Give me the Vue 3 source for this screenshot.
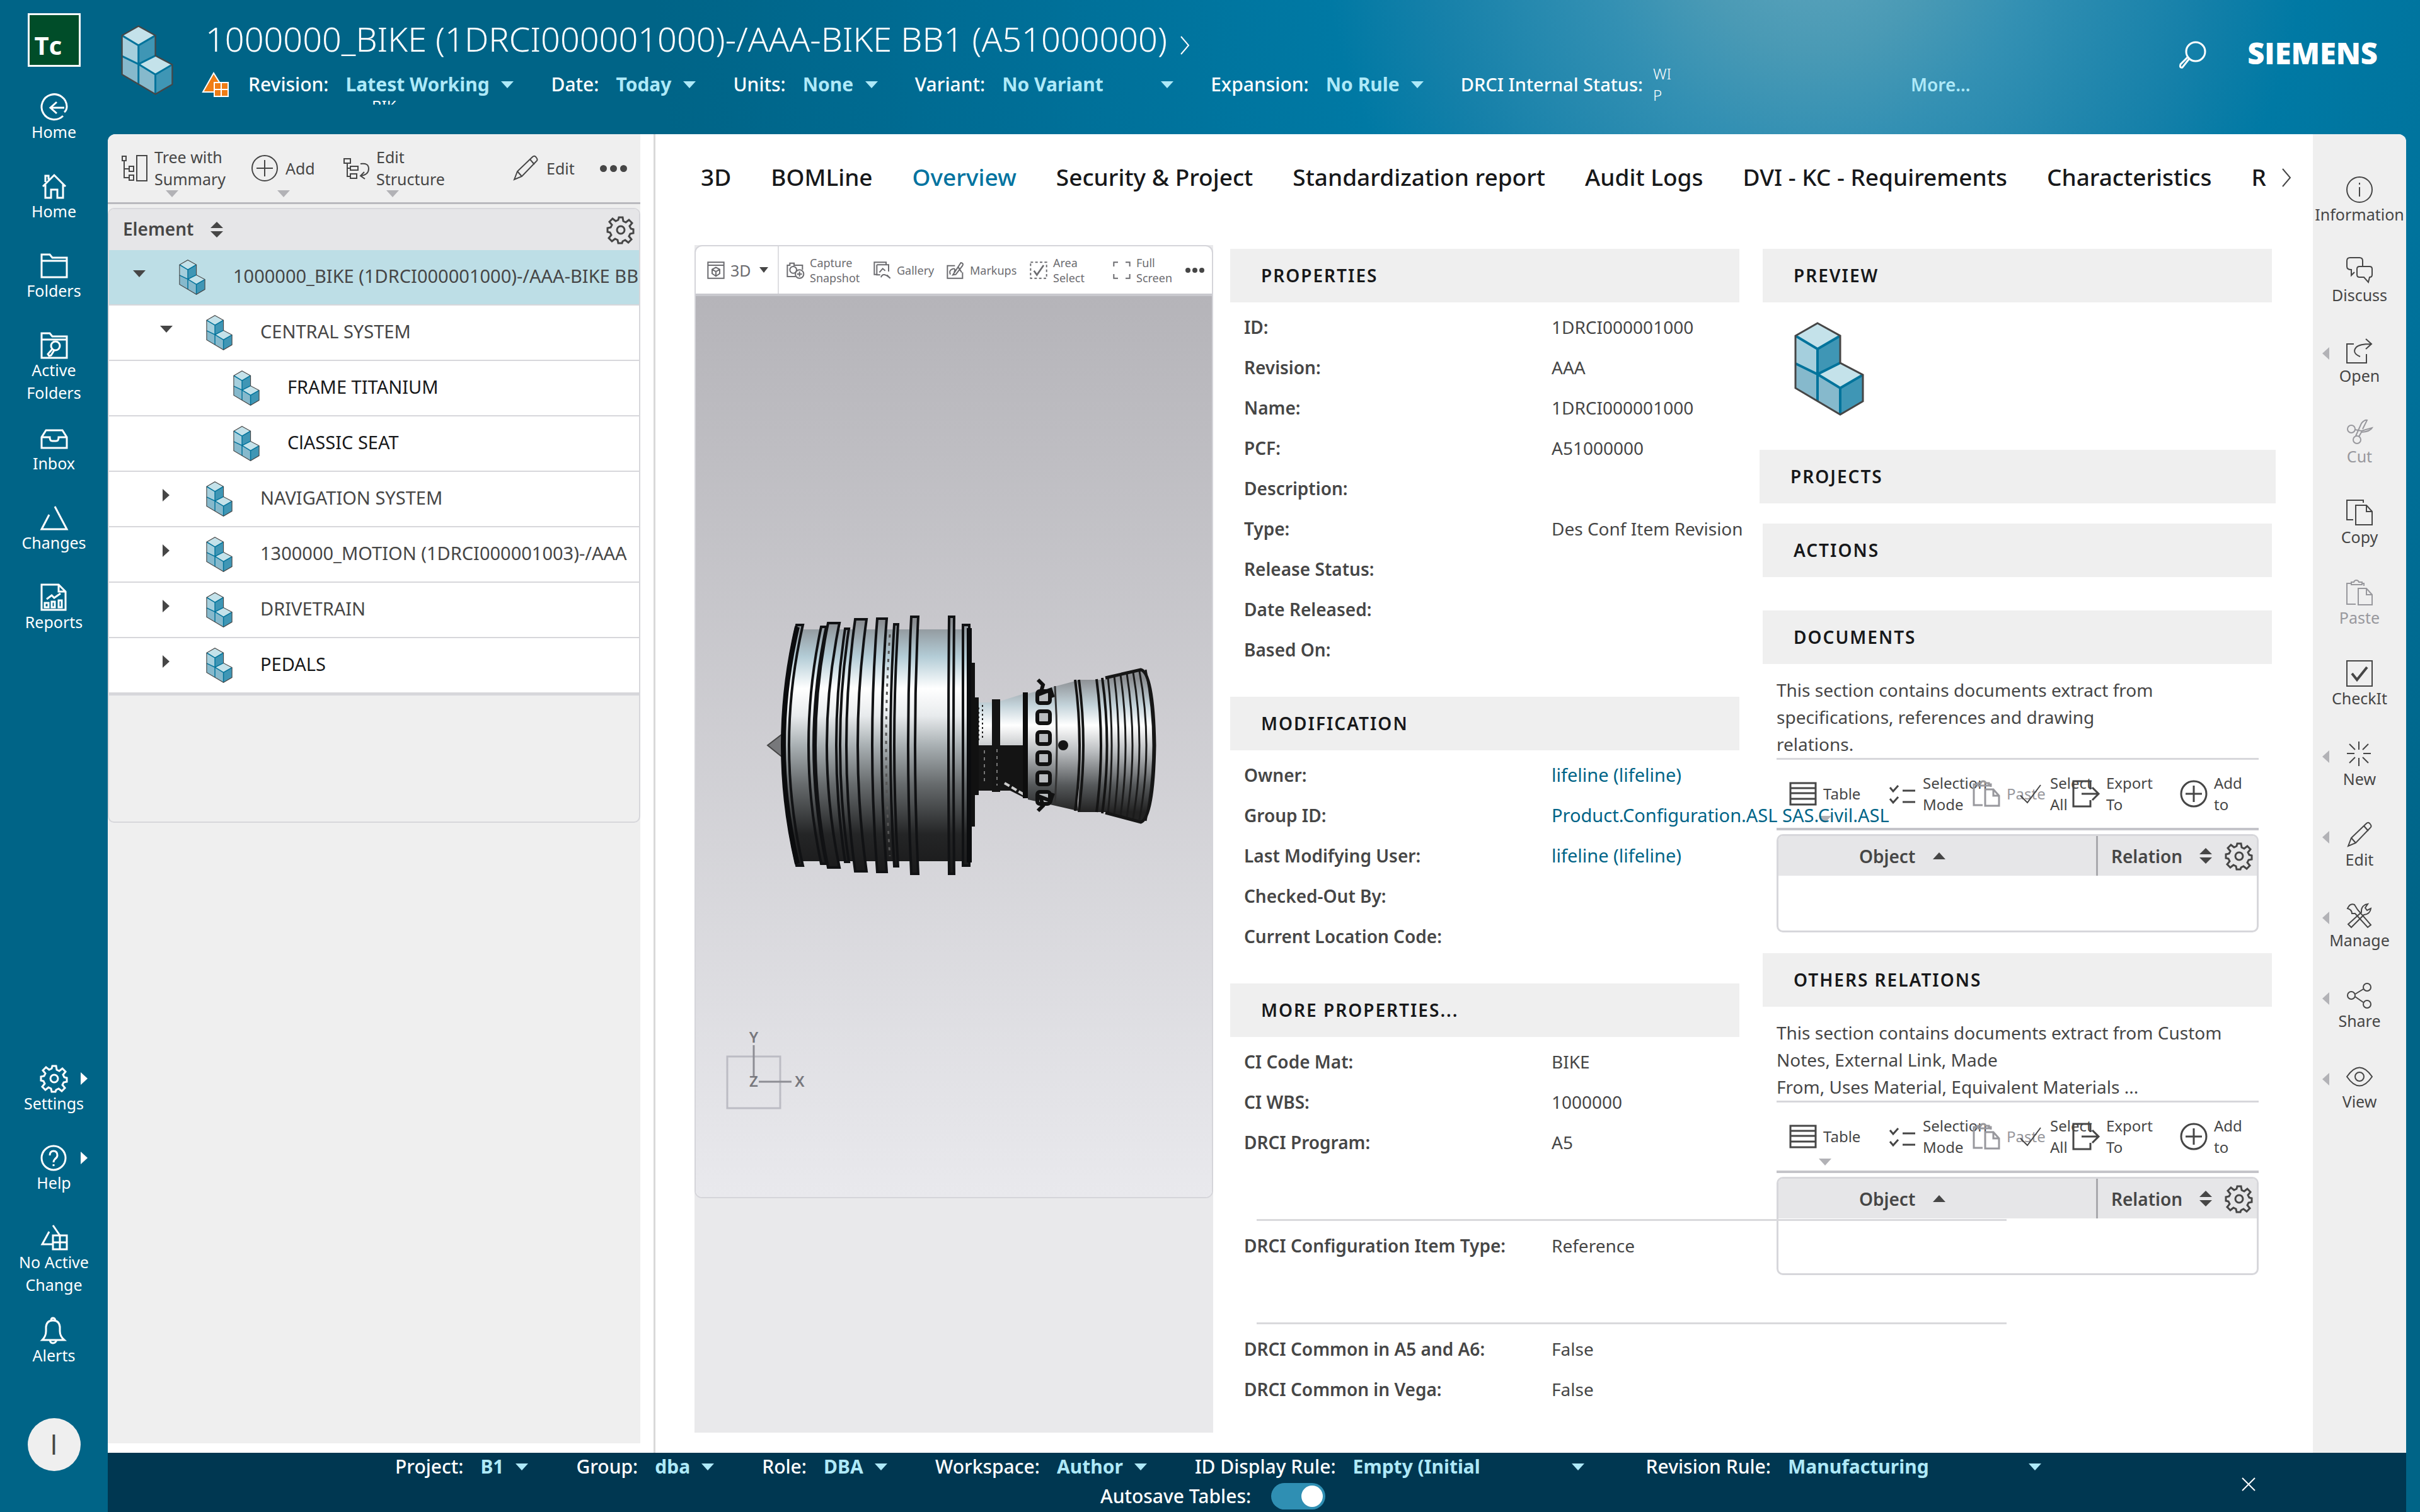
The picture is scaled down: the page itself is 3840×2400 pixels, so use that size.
<script setup>
import { ref } from 'vue'

const icons = {
  homeBack: '<path d="M35 35A20 20 0 1 1 41 20Q41 26 37 29M37 22H15M25 13 15 22 25 31"/>',
  home: '<path d="M3 21 21 3 39 21M7 18V39H16V26H26V39H35V18M7 14V4H12V10"/>',
  folder: '<path d="M1 39V3H14L18 8H41V39ZM1 13H41"/>',
  folderSearch: '<path d="M1 41V2H14L18 7H41V41ZM1 12H41"/><circle cx="23" cy="22" r="7"/><path d="M18 27l-7 8 2 3 3-1 5-8"/>',
  inbox: '<path d="M1 36V19L8 8H34L41 19V36ZM1 19H14Q14 25 18 25H24Q28 25 28 19H41"/>',
  triangle: '<path d="M22 3 41 39H1L13 16"/>',
  report: '<path d="M1 41V1H28L39 12V41ZM28 1V12H39M9 24l8-6 4 4 10-7"/><path d="M6 30h6v7H6zM17 28h5v9h-5zM28 26h5v11h-5z"/>',
  gear: '<path d="M18 2h6l1 6 4 2 5-4 5 5-4 5 2 4 4 1v6l-5 1-2 4 4 5-5 5-5-4-4 2-1 3h-6l-1-5-4-2-5 4-5-5 4-5-2-4-4-1v-6l5-1 2-4-4-5 5-5 5 4 4-2z" transform="translate(0 -1)"/><circle cx="21" cy="21" r="6"/>',
  help: '<circle cx="20" cy="21" r="19"/><path d="M14 17Q14 10 20 10T26 17Q26 20 22 23 20 25 20 28"/><path d="M20 31v3"/>',
  change: '<path d="M19 2 30 18M13 12 2 32H19"/><path d="M19 18H41V40H19ZM30 18V40M19 29H41"/>',
  bell: '<path d="M2 36Q8 30 8 22V15Q9 5 19 5T30 15V22Q30 30 37 36ZM14 36q1 5 5 5t6-5M16 5q0-4 3-4t4 4"/>',
  tree: '<path d="M2 2H8V9H2ZM5 9V36H13M5 22H13M13 18H20V26H13ZM13 32H20V40H13ZM25 1H41V41H25Z"/>',
  plus: '<circle cx="21" cy="21" r="20"/><path d="M21 8V34M8 21H34"/>',
  structure: '<path d="M2 6H12V13H2ZM12 18H24V24H12ZM12 30H22V37H12ZM7 13V34H12M7 21H12M28 14Q41 12 41 22 41 31 29 33M34 27l-6 6 7 5"/>',
  pencil: '<path d="M3 39l5-13L32 3Q35 0 38 4 41 8 38 10L15 34ZM28 7l7 8M8 26l7 8"/>',
  info: '<circle cx="21" cy="21" r="20"/><path d="M21 17V32M21 10v3"/>',
  discuss: '<path d="M13 24l-5 5V20Q1 20 1 15V6Q1 1 6 1H21Q26 1 26 6V14"/><path d="M21 15H37Q41 15 41 19V28Q41 32 37 32L35 40 28 32H21Q17 32 17 28V19Q17 15 21 15Z"/>',
  open: '<path d="M12 10H1V40H32V26M22 30Q8 24 16 15 21 10 39 10M31 2l9 8-9 8"/>',
  cut: '<circle cx="8" cy="17" r="6"/><circle cx="17" cy="34" r="6"/><path d="M14 18 24 20 41 15Q38 21 24 22L20 29M15 28 24 8Q29 2 33 3L26 17"/>',
  copy: '<path d="M11 33H1V2H27V6M15 10H32L41 20V41H15ZM32 10V20H41"/>',
  paste: '<path d="M15 39H1V6H8M8 8V4H12Q13 1 16 1T20 4H25V8ZM25 6H28V10M19 14H32L41 24V40H19ZM32 14V24H41"/>',
  checkBox: '<path d="M1 1H41V41H1Z"/><path d="M9 21l8 10L33 11" stroke-width="4"/>',
  burst: '<path d="M20 1V14M20 27V40M1 20H13M27 20H39M5 5l9 9M35 5l-9 9M5 35l9-9M35 35l-9-9"/>',
  tools: '<path d="M8 40 3 35 24 16Q23 8 30 4L34 3 30 9 33 13 39 10Q38 19 28 20ZM2 10Q6 1 13 4L18 12 39 36 34 40 14 18 9 18Q9 12 2 10Z"/>',
  share: '<circle cx="8" cy="20" r="6"/><circle cx="33" cy="7" r="6"/><circle cx="33" cy="34" r="6"/><path d="M14 18 27 10M14 22 27 31"/>',
  eye: '<path d="M1 21Q21-8 41 21 21 50 1 21Z"/><circle cx="21" cy="21" r="7"/>',
  search: '<circle cx="26" cy="16" r="15"/><path d="M16 27 5 41Q0 42 2 36L14 24"/>',
  list: '<path d="M1 4H41V38H1ZM1 12H41M1 20H41M1 29H41"/>',
  selection: '<path d="M1 11l5 6 8-9M1 29l5 6 8-9M21 16H41M21 34H41"/>',
  check: '<path d="M1 24l11 11L33 7" stroke-width="2"/>',
  exportTo: '<path d="M28 14V1H1V41H28V31M14 21H40M31 11l10 10-10 10"/>',
  cube: '<path d="M2 2H40V40H2ZM2 9H40M21 14l9 5v10l-9 6-9-6V19ZM12 19l9 5 9-5M21 24V35"/>',
  camera: '<path d="M22 36H2V9H8V4H18V9H38V20M8 20a8 8 0 0 1 16 0 8 8 0 0 1-16 0"/><circle cx="31" cy="30" r="10"/><path d="M31 24V36M25 30H37"/>',
  gallery: '<path d="M9 31H2V2H30V8M8 8H36V24M8 8V32H16M14 26l8-9 6 5M18 38q4-14 22 2M32 32l8 8"/>',
  markup: '<path d="M20 10H2V40H38V26M9 31Q5 21 14 18T18 26M15 32 34 3Q41 4 38 10L22 31ZM28 14l8 12"/>',
  area: '<path d="M2 2H40V40H2Z" stroke-dasharray="6 5"/><path d="M10 22l7 10L33 9" stroke-width="4"/>',
  full: '<path d="M2 12V2H12M30 2H40V12M40 30V40H30M12 40H2V30"/>',
}

const rail = [
  { icon: 'homeBack', label: 'Home' },
  { icon: 'home', label: 'Home' },
  { icon: 'folder', label: 'Folders' },
  { icon: 'folderSearch', label: 'Active Folders', tall: true },
  { icon: 'inbox', label: 'Inbox' },
  { icon: 'triangle', label: 'Changes' },
  { icon: 'report', label: 'Reports' },
]
const railBottom = [
  { icon: 'gear', label: 'Settings', flyout: true },
  { icon: 'help', label: 'Help', flyout: true },
  { icon: 'change', label: 'No Active Change', tall: true },
  { icon: 'bell', label: 'Alerts' },
]
const filters = [
  { id: 'revision', label: 'Revision:', value: 'Latest Working' },
  { id: 'date', label: 'Date:', value: 'Today' },
  { id: 'units', label: 'Units:', value: 'None' },
  { id: 'variant', label: 'Variant:', value: 'No Variant', size: 'w-variant' },
  { id: 'expansion', label: 'Expansion:', value: 'No Rule' },
]
const session = [
  { id: 'project', label: 'Project:', value: 'B1' },
  { id: 'group', label: 'Group:', value: 'dba' },
  { id: 'role', label: 'Role:', value: 'DBA' },
  { id: 'workspace', label: 'Workspace:', value: 'Author' },
  { id: 'idrule', label: 'ID Display Rule:', value: 'Empty (Initial', size: 'w-idrule' },
  { id: 'revrule', label: 'Revision Rule:', value: 'Manufacturing', size: 'w-revrule' },
]
const tree = [
  { text: '1000000_BIKE (1DRCI000001000)-/AAA-BIKE BB1', level: 0, state: 'open', selected: true },
  { text: 'CENTRAL SYSTEM', level: 1, state: 'open' },
  { text: 'FRAME TITANIUM', level: 2, state: 'leaf', dark: true },
  { text: 'ClASSIC SEAT', level: 2, state: 'leaf', dark: true },
  { text: 'NAVIGATION SYSTEM', level: 1, state: 'closed' },
  { text: '1300000_MOTION (1DRCI000001003)-/AAA', level: 1, state: 'closed' },
  { text: 'DRIVETRAIN', level: 1, state: 'closed' },
  { text: 'PEDALS', level: 1, state: 'closed', dark: true },
]
const tabs = ['3D', 'BOMLine', 'Overview', 'Security & Project', 'Standardization report', 'Audit Logs', 'DVI - KC - Requirements', 'Characteristics', 'R']
const viewerTools = [
  { icon: 'camera', lines: ['Capture', 'Snapshot'], size: 'v1' },
  { icon: 'gallery', lines: ['Gallery'], size: 'v2' },
  { icon: 'markup', lines: ['Markups'], size: 'v3' },
  { icon: 'area', lines: ['Area', 'Select'], size: 'v4' },
  { icon: 'full', lines: ['Full', 'Screen'], size: 'v5' },
]
const groups = [
  {
    title: 'PROPERTIES',
    blocks: [[
      ['ID:', '1DRCI000001000'], ['Revision:', 'AAA'], ['Name:', '1DRCI000001000'], ['PCF:', 'A51000000'],
      ['Description:', ''], ['Type:', 'Des Conf Item Revision'], ['Release Status:', ''], ['Date Released:', ''], ['Based On:', ''],
    ]],
  },
  {
    title: 'MODIFICATION',
    blocks: [[
      ['Owner:', 'lifeline (lifeline)', true], ['Group ID:', 'Product.Configuration.ASL SAS.Civil.ASL', true],
      ['Last Modifying User:', 'lifeline (lifeline)', true], ['Checked-Out By:', ''], ['Current Location Code:', ''],
    ]],
  },
  {
    title: 'MORE PROPERTIES...',
    blocks: [
      [['CI Code Mat:', 'BIKE'], ['CI WBS:', '1000000'], ['DRCI Program:', 'A5']],
      [['DRCI Configuration Item Type:', 'Reference']],
      [['DRCI Common in A5 and A6:', 'False'], ['DRCI Common in Vega:', 'False']],
    ],
  },
]
const relations = [
  { title: 'DOCUMENTS', lines: ['This section contains documents extract from', 'specifications, references and drawing', 'relations.'] },
  { title: 'OTHERS RELATIONS', lines: ['This section contains documents extract from Custom', 'Notes, External Link, Made', 'From, Uses Material, Equivalent Materials ...'] },
]
const tableTools = [
  { icon: 'list', lines: ['Table'], size: 't1', menu: true },
  { icon: 'selection', lines: ['Selection', 'Mode'], size: 't2' },
  { icon: 'paste', lines: ['Paste'], size: 't3', off: true },
  { icon: 'check', lines: ['Select', 'All'], size: 't4' },
  { icon: 'exportTo', lines: ['Export', 'To'], size: 't5' },
  { icon: 'plus', lines: ['Add', 'to'], size: 't6' },
]
const commands = [
  { icon: 'info', label: 'Information' },
  { icon: 'discuss', label: 'Discuss' },
  { icon: 'open', label: 'Open', fly: true },
  { icon: 'cut', label: 'Cut', off: true },
  { icon: 'copy', label: 'Copy' },
  { icon: 'paste', label: 'Paste', off: true },
  { icon: 'checkBox', label: 'CheckIt' },
  { icon: 'burst', label: 'New', fly: true },
  { icon: 'pencil', label: 'Edit', fly: true },
  { icon: 'tools', label: 'Manage', fly: true },
  { icon: 'share', label: 'Share', fly: true },
  { icon: 'eye', label: 'View', fly: true },
]

const partArt = `
<path fill="#c4e2ea" d="M37 2 73 22 37 43 2 22Z"/><path fill="#a5cfdd" d="M2 22 37 43V83L2 66Z"/>
<path fill="#3f96b5" d="M73 22V65L37 83V43Z"/><path fill="#86b9cc" d="M2 66 37 83V125L2 105Z"/>
<path fill="#c4e2ea" d="M73 65 109 84 73 105 37 83Z"/><path fill="#86b9cc" d="M37 83 73 105V147L37 125Z"/>
<path fill="#3f96b5" d="M109 84V126L73 147V105Z"/>
<path fill="none" stroke="#00739b" stroke-width="4" d="M2 22 37 43 73 22M37 43V125M2 66 37 83 73 65M37 83 73 105 109 84M73 105V147"/>
<path fill="none" stroke="#464646" stroke-width="3" d="M37 2 73 22V65L109 84V126L73 147 2 105V22Z"/>`

// Engine silhouette: rings are drawn around the horizontal axis of the model.
const AXIS = 716
const ring = ({ x, w, top, b }) => {
  const bottom = AXIS * 2 - top
  return `M${x} ${top}Q${x - b * 2} ${AXIS} ${x} ${bottom}H${x + w}Q${x + w - b * 2} ${AXIS} ${x + w} ${top}Z`
}
const rings = [
  { x: 160, w: 10, top: 525, b: 22 },
  { x: 199, w: 8, top: 528, b: 20 },
  { x: 210, w: 18, top: 522, b: 20 },
  { x: 237, w: 6, top: 531, b: 14 },
  { x: 253, w: 18, top: 516, b: 14 },
  { x: 288, w: 15, top: 515, b: 8 },
  { x: 315, w: 6, top: 524, b: 6 },
  { x: 342, w: 11, top: 512, b: 5 },
  { x: 402, w: 8, top: 512, b: 1 },
  { x: 424, w: 10, top: 525, b: 0 },
].map(ring)
const nozzle = [0, 1, 2, 3, 4, 5, 6].map((i) => {
  const x = 654 + i * 10
  const t = 608 - i * 2
  return `M${x} ${t}Q${x + 12 + i * 2} ${AXIS} ${x} ${AXIS * 2 - t}`
})
const ports = [640, 672, 705, 737, 769, 800]
const autosave = ref(true)
</script>

<template>
  <div class="app">
    <nav class="rail" aria-label="Global">
      <div class="logo">Tc</div>
      <ul class="rail-list">
        <li v-for="(r, i) in rail" :key="i" :class="{ tall: r.tall }">
          <a href="#"><svg class="ico" viewBox="0 0 42 42" v-html="icons[r.icon]"></svg><span>{{ r.label }}</span></a>
        </li>
      </ul>
      <ul class="rail-list bottom">
        <li v-for="r in railBottom" :key="r.label" :class="{ tall: r.tall }">
          <a href="#"><svg class="ico" viewBox="0 0 42 42" v-html="icons[r.icon]"></svg><span>{{ r.label }}</span></a>
          <i v-if="r.flyout" class="fly-right"></i>
        </li>
      </ul>
      <button class="avatar" type="button" aria-label="Profile">l</button>
    </nav>

    <div class="shell">
      <header class="head">
        <svg class="part-lg" viewBox="0 0 111 149" v-html="partArt"></svg>
        <div class="head-main">
          <div class="title-row">
            <h1>1000000_BIKE (1DRCI000001000)-/AAA-BIKE BB1 (A51000000)</h1>
            <svg class="chev" viewBox="0 0 16 30"><path d="M2 1 14 15 2 29" /></svg>
          </div>
          <div class="filters">
            <svg class="warn" viewBox="0 0 44 40">
              <path d="M19 2 2 32H20V18H29Z" fill="#f07d16" stroke="#fff" stroke-width="2" />
              <path d="M20 17H42V39H20Z" fill="#f07d16" stroke="#fff" stroke-width="2" /><path d="M31 17V39M20 28H42" stroke="#fff" stroke-width="2" />
            </svg>
            <div v-for="f in filters" :key="f.id" class="pick">
              <label :for="f.id">{{ f.label }}</label>
              <select :id="f.id" :class="f.size"><option>{{ f.value }}</option></select>
              <i class="down"></i>
            </div>
            <div class="status"><span>DRCI Internal Status:</span><span class="wip">WI<br>P</span></div>
            <a href="#" class="more">More...</a>
          </div>
          <div class="clipped">BIK</div>
        </div>
        <button class="find" type="button" aria-label="Search"><svg class="ico" viewBox="0 0 42 42" v-html="icons.search"></svg></button>
        <div class="brand">SIEMENS</div>
      </header>

      <div class="body">
        <div class="work">
          <section class="left">
            <div class="bar">
              <button type="button" class="b1"><svg class="ico" viewBox="0 0 42 42" v-html="icons.tree"></svg><span>Tree with<br>Summary</span><i class="sub"></i></button>
              <button type="button" class="b2"><svg class="ico" viewBox="0 0 42 42" v-html="icons.plus"></svg><span>Add</span><i class="sub"></i></button>
              <button type="button" class="b3"><svg class="ico" viewBox="0 0 42 42" v-html="icons.structure"></svg><span>Edit<br>Structure</span><i class="sub"></i></button>
              <button type="button" class="b4"><svg class="ico" viewBox="0 0 42 42" v-html="icons.pencil"></svg><span>Edit</span></button>
              <button type="button" class="dots" aria-label="More"><i></i><i></i><i></i></button>
            </div>
            <div class="tree">
              <div class="tree-head"><span>Element</span><i class="sort"></i><button type="button" aria-label="Table settings"><svg class="ico" viewBox="0 0 42 42" v-html="icons.gear"></svg></button></div>
              <ul>
                <li v-for="t in tree" :key="t.text" :class="['lv' + t.level, { selected: t.selected, dark: t.dark }]">
                  <i :class="['tw', t.state]"></i>
                  <svg class="part" viewBox="0 0 111 149" v-html="partArt"></svg>
                  <span>{{ t.text }}</span>
                </li>
              </ul>
            </div>
          </section>

          <main class="main">
            <nav class="tabs">
              <a v-for="t in tabs" :key="t" href="#" :class="{ on: t === 'Overview' }">{{ t }}</a>
              <svg class="chev dark-chev" viewBox="0 0 16 30"><path d="M2 1 14 15 2 29" /></svg>
            </nav>
            <div class="cols">
              <section class="viewer-col">
                <div class="viewer">
                  <div class="vbar">
                    <button type="button" class="v0"><svg class="vico" viewBox="0 0 42 42" v-html="icons.cube"></svg><span>3D</span><i class="vdown"></i></button>
                    <button v-for="v in viewerTools" :key="v.icon" type="button" :class="v.size">
                      <svg class="vico" viewBox="0 0 42 42" v-html="icons[v.icon]"></svg>
                      <span><template v-for="(l, i) in v.lines" :key="l"><br v-if="i">{{ l }}</template></span>
                    </button>
                    <button type="button" class="dots small" aria-label="More"><i></i><i></i><i></i></button>
                  </div>
                  <svg class="scene" viewBox="0 3 819 1430">
                    <defs>
                      <linearGradient id="sky" x1="0" y1="0" x2="0" y2="1"><stop offset="0" stop-color="#b5b4b9" /><stop offset="1" stop-color="#e9e9ed" /></linearGradient>
                      <linearGradient id="metal" gradientUnits="userSpaceOnUse" x1="0" y1="520" x2="0" y2="912">
                        <stop offset="0" stop-color="#8b8e92" /><stop offset=".14" stop-color="#b3ccd6" /><stop offset=".27" stop-color="#fff" /><stop offset=".38" stop-color="#e8ebed" /><stop offset=".5" stop-color="#a9b0b3" /><stop offset=".66" stop-color="#666a6c" /><stop offset=".86" stop-color="#242526" /><stop offset="1" stop-color="#1b1b1c" />
                      </linearGradient>
                      <linearGradient id="metal2" gradientUnits="userSpaceOnUse" x1="0" y1="610" x2="0" y2="822">
                        <stop offset="0" stop-color="#8b8e92" /><stop offset=".2" stop-color="#c3d3da" /><stop offset=".35" stop-color="#fff" /><stop offset=".55" stop-color="#b9bcbf" /><stop offset=".8" stop-color="#55585a" /><stop offset="1" stop-color="#222" />
                      </linearGradient>
                    </defs>
                    <rect width="819" height="1434" fill="url(#sky)" />
                    <path d="M114 716 140 696V737Z" fill="#77787b" stroke="#444" stroke-width="2" />
                    <path d="M160 532H436V900H160Q120 716 160 532Z" fill="url(#metal)" />
                    <g stroke="#111214" stroke-width="4"><path v-for="d in rings" :key="d" :d="d" fill="url(#metal)" /></g>
                    <path d="M308 540Q296 716 308 892" fill="none" stroke="#555" stroke-width="3" stroke-dasharray="5 8" />
                    <path d="M161 528Q117 716 161 904M434 530V902" fill="none" stroke="#0b0c0e" stroke-width="8" />
                    <path d="M437 585H443V845H437ZM443 640H449V795H443Z" fill="#111" />
                    <path d="M449 648H472V782H449Z" fill="url(#metal2)" />
                    <path d="M449 716H520V788H449Z" fill="#161616" />
                    <path d="M449 656V708M455 652V708" stroke="#222" stroke-width="2" stroke-dasharray="3 4" />
                    <path d="M470 643H483V790H470Z" fill="#151515" />
                    <path d="M483 646 521 634V716H483Z" fill="url(#metal2)" />
                    <path d="M483 716H523V800L483 780Z" fill="#141414" />
                    <path d="M458 724V775M478 722V780" stroke="#777" stroke-width="2" stroke-dasharray="5 6" />
                    <path d="M490 776 524 796" stroke="#ccc" stroke-width="4" stroke-dasharray="9 4" />
                    <path d="M527 634 606 613V820L527 802Z" fill="url(#metal2)" />
                    <path d="M523 632V800" stroke="#0d0d0d" stroke-width="8" />
                    <path d="M570 622Q576 716 570 810" fill="none" stroke="#333" stroke-width="3" />
                    <g fill="#b9bcbf" stroke="#111" stroke-width="6">
                      <rect v-for="p in ports" :key="p" x="542" :y="p - 10" width="20" height="19" rx="4" />
                    </g>
                    <path d="M543 612l8 8-4 14 16-6 4 12M543 820l8-8-4-14 16 6 4-12" fill="none" stroke="#111" stroke-width="6" />
                    <circle cx="583" cy="716" r="8" fill="#151515" />
                    <path d="M606 612H650V822H606Q614 716 606 612Z" fill="url(#metal2)" />
                    <path d="M650 610 706 596Q726 600 728 716 726 832 706 838L650 822Z" fill="url(#metal2)" />
                    <path d="M602 612Q616 716 602 820M608 612Q622 716 608 820M636 611Q650 716 636 822M645 609Q660 716 645 824" fill="none" stroke="#141414" stroke-width="4" />
                    <g fill="none" stroke="#1b1b1b" stroke-width="3"><path v-for="d in nozzle" :key="d" :d="d" /></g>
                    <path d="M650 609 706 596Q726 600 728 716 726 832 706 838L650 823" fill="none" stroke="#161616" stroke-width="5" />
                    <g fill="none" stroke="#8d8d94" stroke-width="3">
                      <rect x="50" y="1210" width="84" height="82" stroke="#bcbcc4" /><path d="M92 1192V1242M100 1250H152" />
                    </g>
                    <g class="axis"><text x="92" y="1188">Y</text><text x="92" y="1258">Z</text><text x="165" y="1258">X</text></g>
                  </svg>
                </div>
              </section>

              <section class="props">
                <div v-for="g in groups" :key="g.title" class="group">
                  <h2>{{ g.title }}</h2>
                  <template v-for="(b, bi) in g.blocks" :key="bi">
                    <hr v-if="bi">
                    <dl>
                      <div v-for="p in b" :key="p[0]"><dt>{{ p[0] }}</dt><dd><a v-if="p[2]" href="#">{{ p[1] }}</a><template v-else>{{ p[1] }}</template></dd></div>
                    </dl>
                  </template>
                </div>
              </section>

              <section class="side">
                <h2>PREVIEW</h2>
                <svg class="part-xl" viewBox="0 0 111 149" v-html="partArt"></svg>
                <h2 class="wide">PROJECTS</h2>
                <h2 class="actions">ACTIONS</h2>
                <div v-for="r in relations" :key="r.title" class="rel">
                  <h2>{{ r.title }}</h2>
                  <p><template v-for="(l, i) in r.lines" :key="l"><br v-if="i">{{ l }}</template></p>
                  <div class="tbar">
                    <button v-for="t in tableTools" :key="t.icon" type="button" :class="[t.size, { off: t.off }]">
                      <svg class="ico" viewBox="0 0 42 42" v-html="icons[t.icon]"></svg>
                      <span><template v-for="(l, i) in t.lines" :key="l"><br v-if="i">{{ l }}</template></span>
                      <i v-if="t.menu" class="sub"></i>
                    </button>
                  </div>
                  <div class="tbox">
                    <table>
                      <thead><tr>
                        <th class="c1"><div>Object <i class="up"></i></div></th>
                        <th><div>Relation <i class="sort"></i><button type="button" aria-label="Table settings"><svg class="ico" viewBox="0 0 42 42" v-html="icons.gear"></svg></button></div></th>
                      </tr></thead>
                      <tbody><tr><td colspan="2"></td></tr></tbody>
                    </table>
                  </div>
                </div>
              </section>
            </div>
          </main>
        </div>

        <aside class="cmds">
          <button v-for="c in commands" :key="c.label" type="button" :class="{ off: c.off }">
            <i v-if="c.fly" class="fly-left"></i>
            <svg class="ico" viewBox="0 0 42 42" v-html="icons[c.icon]"></svg><span>{{ c.label }}</span>
          </button>
        </aside>
      </div>

      <footer class="foot">
        <div class="session">
          <div v-for="f in session" :key="f.id" class="pick">
            <label :for="f.id">{{ f.label }}</label>
            <select :id="f.id" :class="f.size"><option>{{ f.value }}</option></select>
            <i class="down"></i>
          </div>
        </div>
        <div class="auto"><label for="autosave">Autosave Tables:</label><input id="autosave" v-model="autosave" type="checkbox" role="switch"></div>
        <button type="button" class="close" aria-label="Close"><svg viewBox="0 0 22 22"><path d="M1 1 21 21M21 1 1 21" /></svg></button>
      </footer>
    </div>
  </div>
</template>

<style>
body { margin: 0; }
</style>

<style scoped>
* { box-sizing: border-box; }
.app {
  display: flex; min-height: 100vh; color: #464646;
  font: 400 28px/36px "Noto Sans", "Open Sans", sans-serif;
  background: radial-gradient(circle at 75% -120px, #60a6bd 0, #4a9ab5 200px, #3390b3 350px, #1580a9 620px, #0079a4 780px, #006d95 1350px, #006487 1850px);
}
h1, h2, ul, dl, dd, p { margin: 0; padding: 0; font-weight: 400; }
ul { list-style: none; }
a { color: inherit; text-decoration: none; }
button { font: inherit; color: inherit; background: none; border: 0; padding: 0; margin: 0; text-align: left; }
svg { display: block; flex: none; }
.ico, .vico { width: 42px; height: 42px; fill: none; stroke: currentColor; stroke-width: 3; overflow: visible; }
.vico { width: 28px; height: 28px; }

.rail { width: 171px; flex: none; display: flex; flex-direction: column; align-items: center; color: #fff; padding: 21px 0 65px; font-size: 25px; }
.logo { width: 84px; height: 85px; border: 3px solid #fff; background: #004d29; font: 700 40px/40px "Open Sans", sans-serif; padding: 28px 0 0 8px; margin-bottom: 43px; }
.rail-list { width: 100%; }
.rail-list li { position: relative; margin-bottom: 48px; }
.rail-list li.tall { margin-bottom: 34px; }
.rail-list a { display: flex; flex-direction: column; align-items: center; text-align: center; }
.rail-list span { max-width: 130px; }
.bottom { margin-top: auto; }
.fly-right { position: absolute; left: 128px; top: 11px; border: 10px solid transparent; border-left: 11px solid #fff; border-right: 0; }
.avatar { width: 84px; height: 84px; border-radius: 50%; background: #efefef; color: #464646; font-size: 42px; text-align: center; margin-top: 34px; }

.shell { flex: 1; min-width: 0; display: flex; flex-direction: column; }
.head { height: 213px; display: flex; color: #fff; padding: 0 67px 0 21px; align-items: flex-start; }
.part-lg { width: 83px; height: 111px; margin: 40px 45px 0 0; }
.head-main { flex: 1; min-width: 0; }
.title-row { display: flex; align-items: center; height: 104px; padding: 18px 0 0 6px; }
h1 { font-size: 54px; font-weight: 300; line-height: 72px; white-space: nowrap; }
.title-row .chev { margin-left: 20px; margin-top: 22px; }
.chev { width: 16px; height: 30px; fill: none; stroke: currentColor; stroke-width: 2; }
.filters { display: flex; align-items: center; height: 60px; white-space: nowrap; }
.warn { width: 44px; height: 40px; margin-right: 30px; fill: none; }
.pick { display: flex; align-items: center; font-size: 30px; }
.filters .pick { margin-right: 59px; }
.pick label, .auto label { font-weight: 500; font-size: 30px; margin-right: 27px; color: #fff; }
.pick select { appearance: none; border: 0; padding: 0; margin: 0 18px 0 0; background: transparent; color: #aee9f8; font: inherit; font-weight: 700; height: 44px; }
.pick select.w-variant { width: 234px; }
.pick select.w-idrule { width: 329px; }
.pick select.w-revrule { width: 364px; }
.down { border: 10px solid transparent; border-top: 11px solid #aee9f8; border-bottom: 0; }
.status { display: flex; align-items: center; font-size: 29px; font-weight: 500; }
.wip { font-size: 24px; font-weight: 300; line-height: 34px; margin-left: 16px; width: 37px; }
.more { color: #aee9f8; font-weight: 600; margin-left: 372px; }
.clipped { height: 10px; overflow: hidden; font-size: 24px; line-height: 24px; width: 60px; margin-left: 270px; margin-top: -8px; }
.find { margin: 66px 66px 0 0; }
.brand { font: 800 47px/60px "Open Sans", sans-serif; margin-top: 54px; }

.body { flex: 1; display: flex; margin-right: 22px; background: #fff; border-radius: 12px 12px 0 0; overflow: hidden; }
.work { flex: 1; min-width: 0; display: grid; grid-template-columns: minmax(0, 866fr) minmax(0, 2633fr); }
.left { margin-bottom: 15px; background: #efefef; margin-right: 21px; min-width: 0; }
.main { border-left: 3px solid #d9d9d9; min-width: 0; display: flex; flex-direction: column; }
.bar { display: flex; height: 111px; border-bottom: 3px solid #b9b9be; font-size: 25px; line-height: 35px; white-space: nowrap; padding: 0 21px; }
.bar button { display: flex; align-items: center; position: relative; }
.bar span, .tbar span { margin-left: 11px; }
.b1, .b2, .b3 { flex: none; }
.b1 { width: 207px; } .b2 { width: 145px; } .b3 { width: 269px; }
.b2 span, .b4 span { margin-left: 12px; }
.bar .ico { stroke-width: 2; }
.dots { display: flex; gap: 5px; margin-left: auto; align-items: center; }
.dots i { width: 11px; height: 11px; border-radius: 50%; background: #464646; }
.sub { position: absolute; left: 71px; bottom: 8px; border: 10px solid transparent; border-top: 11px solid #b2b2b6; border-bottom: 0; }
.b2 .sub { left: 41px; } .b3 .sub { left: 69px; }
.tree { margin-top: 6px; border: 2px solid #d7d7db; border-radius: 10px; height: 976px; overflow: hidden; font-size: 29px; }
.tree-head { height: 65px; background: #e6e6e8; display: flex; align-items: center; padding: 0 8px 0 22px; font-weight: 600; font-size: 28px; }
.tree-head span { padding-bottom: 3px; }
.tree-head button { margin-left: auto; }
.sort { display: inline-flex; flex-direction: column; gap: 5px; margin-left: 27px; }
.sort::before, .sort::after { content: ""; border: 10px solid transparent; }
.sort::before { border-bottom: 10px solid #464646; border-top: 0; }
.sort::after { border-top: 10px solid #464646; border-bottom: 0; }
.tree li { height: 88px; display: flex; align-items: center; background: #fff; border-bottom: 2px solid #d7d7db; white-space: nowrap; padding-left: 37px; }
.tree li.lv1 { padding-left: 80px; } .tree li.lv2 { padding-left: 123px; }
.tree li:last-child { border-bottom-width: 5px; height: 91px; }
.tree li.selected { background: #bddee6; }
.tree li.dark { color: #17181a; }
.tree li span { margin-left: 44px; padding-bottom: 4px; }
.tw { width: 21px; height: 21px; margin: -12px 53px 0 0; flex: none; display: flex; justify-content: center; align-items: center; }
.tw.open::before { content: ""; border: 10px solid transparent; border-top: 11px solid #464646; border-bottom: 0; }
.tw.closed::before { content: ""; border: 10px solid transparent; border-left: 11px solid #464646; border-right: 0; }
.part { width: 42px; height: 56px; }

.tabs { display: flex; gap: 63px; height: 176px; padding: 45px 0 0 72px; font-size: 37px; line-height: 46px; font-weight: 500; color: #17181a; white-space: nowrap; }
.tabs .on { color: #0073a0; }
.dark-chev { color: #464646; margin: 9px 0 0 -39px; }
.cols { flex: 1; display: grid; grid-template-columns: minmax(0, 823fr) minmax(0, 808fr) minmax(0, 818fr); gap: 27px; padding: 0 65px 32px 62px; }
.viewer-col { background: #e9e9eb; }
.viewer { border: 2px solid #d5d5da; border-radius: 12px; overflow: hidden; background: #fff; }
.vbar { display: flex; height: 79px; border-bottom: 4px solid #c9c9ce; font-size: 18px; line-height: 24px; color: #6c6c70; white-space: nowrap; }
.vbar button { display: flex; align-items: center; flex: none; }
.vbar span { margin-left: 9px; }
.v0 { width: 132px; border-right: 2px solid #dedee2; font-size: 25px; }
.vbar .v0 { padding-left: 18px; }
.vdown { margin-left: 13px; border: 7px solid transparent; border-top: 9px solid #464646; border-bottom: 0; }
.v1 { width: 150px; } .v2 { width: 116px; } .v3 { width: 132px; } .v4 { width: 132px; } .v5 { width: 110px; }
.vbar .v1 { padding-left: 12px; }
.vbar .dots.small { margin: 0 12px 0 auto; gap: 3px; }
.dots.small i { width: 8px; height: 8px; }
.scene { width: 100%; height: auto; }
.axis { font-size: 24px; font-weight: 600; fill: #77777d; text-anchor: middle; }

h2 { height: 85px; background: #efefef; color: #17181a; font-size: 28px; font-weight: 600; line-height: 85px; padding-left: 49px; margin-top: 6px; letter-spacing: 2px; }
.group { margin-bottom: 43px; }
.group:last-child { margin-bottom: 0; }
.group h2 { margin-top: 0; }
.props { padding-top: 6px; }
dl { padding: 7px 0 0 22px; }
dl div { display: flex; height: 64px; align-items: center; white-space: nowrap; position: relative; z-index: 1; }
dt { width: 488px; flex: none; font-weight: 600; }
dd a { color: #006487; font-size: 29px; }
hr { border: 0; border-top: 3px solid #d9d9dc; width: 1190px; margin: 90px 0 0 42px; position: relative; z-index: 1; }

.side { padding-left: 10px; }
.part-xl { width: 111px; height: 149px; margin: 31px 0 0 50px; }
.side .wide { margin: 54px -6px 0 -5px; }
.side .actions { margin-top: 32px; }
.rel h2 { margin: 0; }
.rel { margin-bottom: 33px; }
.actions + .rel { margin-top: 53px; }
.rel p { padding: 20px 0 0 22px; line-height: 43px; white-space: nowrap; }
.tbar { margin: 0 21px 0 22px; height: 115px; border-top: 3px solid #d7d7db; border-bottom: 4px solid #c4c4c9; display: flex; padding-left: 21px; font-size: 24px; line-height: 34px; white-space: nowrap; }
.tbar button { display: flex; align-items: center; flex: none; position: relative; }
.tbar .sub { left: 46px; bottom: 8px; }
.tbar button.off, .cmds .off { color: #98989d; }
.t1 { width: 158px; } .t2 { width: 133px; } .t3 { width: 74px; } .t4 { width: 84px; } .t5 { width: 171px; }
.tbar .t4 span { margin-left: 6px; }
.tbox { margin: 6px 21px 0 22px; border: 3px solid #d7d7db; border-radius: 10px; overflow: hidden; }
table { width: 100%; border-collapse: collapse; table-layout: fixed; }
th { background: #e6e6e8; height: 63px; padding: 0; font-weight: 600; text-align: left; }
th div { display: flex; align-items: center; padding-left: 21px; }
th.c1 { width: 66.6%; border-right: 3px solid #a9a9ad; }
th.c1 div { padding-left: 128px; }
th button { margin-left: 22px; }
.up { margin-left: 28px; border: 10px solid transparent; border-bottom: 11px solid #464646; border-top: 0; }
td { height: 87px; padding: 0; }

.cmds { width: 148px; flex: none; background: #efefef; padding-top: 67px; font-size: 25px; }
.cmds button { display: flex; flex-direction: column; align-items: center; position: relative; width: 100%; height: 128px; }
.cmds .ico { stroke-width: 2; }
.fly-left { position: absolute; left: 15px; top: 15px; border: 10px solid transparent; border-right: 11px solid #b2b2b6; border-left: 0; }

.foot { min-height: 94px; margin-right: 22px; background: #003751; color: #fff; position: relative; }
.session { display: flex; gap: 76px; padding-left: 456px; height: 44px; white-space: nowrap; }
.session .pick:last-child { margin-left: 22px; }
.auto { display: flex; align-items: center; height: 49px; padding-left: 1575px; }
.auto input { appearance: none; margin: 0 0 0 5px; width: 86px; height: 42px; border-radius: 21px; background: #2f8fb3; position: relative; }
.auto input::after { content: ""; position: absolute; right: 4px; top: 4px; width: 34px; height: 34px; border-radius: 50%; background: #fff; }
.close { position: absolute; right: 239px; top: 39px; }
.close svg { width: 22px; height: 22px; fill: none; stroke: #fff; stroke-width: 2; }
</style>
